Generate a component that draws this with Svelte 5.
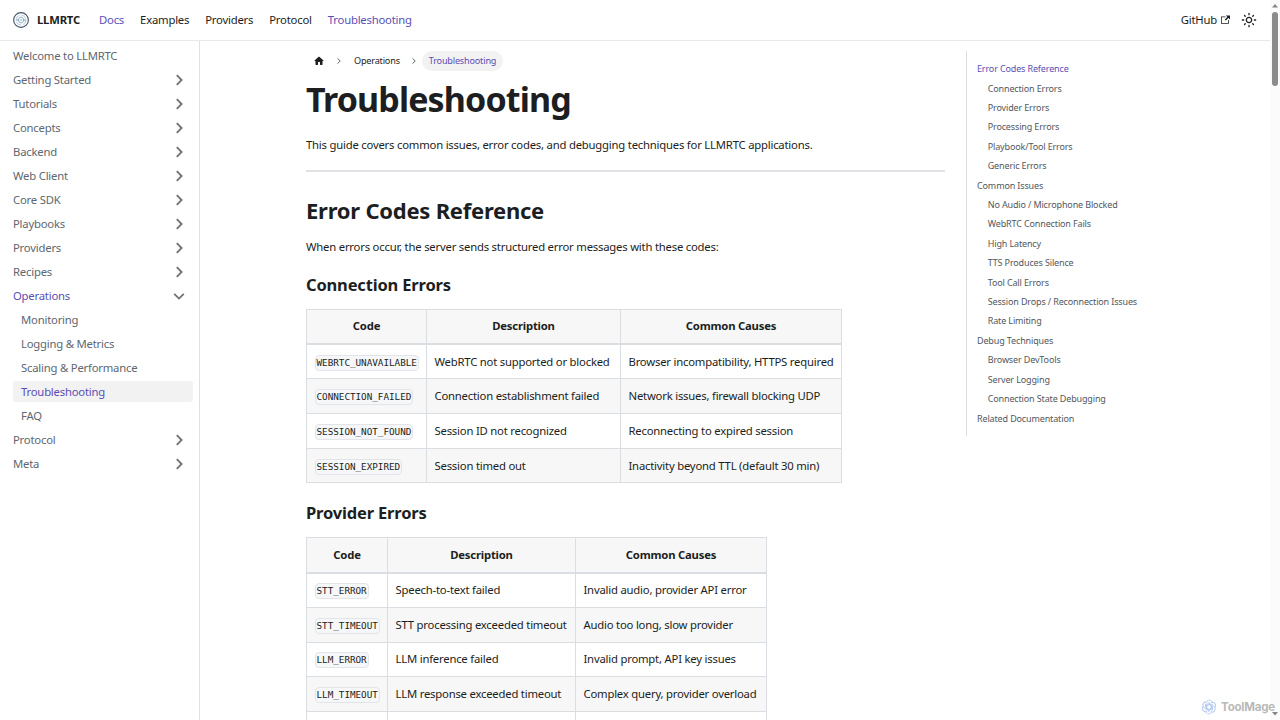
<script lang="ts">
  type TocItem = { label: string; level: 2 | 3 };
  type Row = { code: string; description: string; causes: string };

  const navLinks = ['Docs', 'Examples', 'Providers', 'Protocol', 'Troubleshooting'];
  const activeLinks = ['Docs', 'Troubleshooting'];

  const sections = [
    'Getting Started', 'Tutorials', 'Concepts', 'Backend', 'Web Client',
    'Core SDK', 'Playbooks', 'Providers', 'Recipes', 'Operations', 'Protocol', 'Meta',
  ];
  const operations = ['Monitoring', 'Logging & Metrics', 'Scaling & Performance', 'Troubleshooting', 'FAQ'];

  let open = $state('Operations');

  const toc: TocItem[] = [
    { label: 'Error Codes Reference', level: 2 },
    { label: 'Connection Errors', level: 3 },
    { label: 'Provider Errors', level: 3 },
    { label: 'Processing Errors', level: 3 },
    { label: 'Playbook/Tool Errors', level: 3 },
    { label: 'Generic Errors', level: 3 },
    { label: 'Common Issues', level: 2 },
    { label: 'No Audio / Microphone Blocked', level: 3 },
    { label: 'WebRTC Connection Fails', level: 3 },
    { label: 'High Latency', level: 3 },
    { label: 'TTS Produces Silence', level: 3 },
    { label: 'Tool Call Errors', level: 3 },
    { label: 'Session Drops / Reconnection Issues', level: 3 },
    { label: 'Rate Limiting', level: 3 },
    { label: 'Debug Techniques', level: 2 },
    { label: 'Browser DevTools', level: 3 },
    { label: 'Server Logging', level: 3 },
    { label: 'Connection State Debugging', level: 3 },
    { label: 'Related Documentation', level: 2 },
  ];

  const connectionErrors: Row[] = [
    { code: 'WEBRTC_UNAVAILABLE', description: 'WebRTC not supported or blocked', causes: 'Browser incompatibility, HTTPS required' },
    { code: 'CONNECTION_FAILED', description: 'Connection establishment failed', causes: 'Network issues, firewall blocking UDP' },
    { code: 'SESSION_NOT_FOUND', description: 'Session ID not recognized', causes: 'Reconnecting to expired session' },
    { code: 'SESSION_EXPIRED', description: 'Session timed out', causes: 'Inactivity beyond TTL (default 30 min)' },
  ];
  const providerErrors: Row[] = [
    { code: 'STT_ERROR', description: 'Speech-to-text failed', causes: 'Invalid audio, provider API error' },
    { code: 'STT_TIMEOUT', description: 'STT processing exceeded timeout', causes: 'Audio too long, slow provider' },
    { code: 'LLM_ERROR', description: 'LLM inference failed', causes: 'Invalid prompt, API key issues' },
    { code: 'LLM_TIMEOUT', description: 'LLM response exceeded timeout', causes: 'Complex query, provider overload' },
    { code: '', description: '', causes: '' },
  ];
</script>

{#snippet errorTable(rows: Row[], widths: number[])}
  <table style:width="{widths[0] + widths[1] + widths[2]}px">
    <colgroup>
      {#each widths as w}<col style:width="{w}px" />{/each}
    </colgroup>
    <thead>
      <tr><th>Code</th><th>Description</th><th>Common Causes</th></tr>
    </thead>
    <tbody>
      {#each rows as row}
        <tr>
          <td>{#if row.code}<code>{row.code}</code>{/if}</td>
          <td>{row.description}</td>
          <td>{row.causes}</td>
        </tr>
      {/each}
    </tbody>
  </table>
{/snippet}

{#snippet separator()}
  <svg class="separator" viewBox="0 0 6 8" width="6" height="8"><path d="M1.5 1.4 4.2 4 1.5 6.6" /></svg>
{/snippet}

<div class="page">
  <nav class="navbar">
    <a class="brand" href="#top">
      <svg class="logo" viewBox="0 0 18 18" width="18" height="18">
        <circle cx="9" cy="9" r="7.4" fill="#f9fbfc" stroke="#46546a" stroke-width="1.1" />
        <circle cx="9" cy="9" r="4.9" fill="none" stroke="#a9c2d8" stroke-width=".8" stroke-dasharray="5.5 2.2" />
        <path d="M3.8 9h2.4c.5-2.2 1.7-2.8 2.8-2.8s2.3.6 2.8 2.8h2.4M6.2 9c.5 2.2 1.7 2.8 2.8 2.8s2.3-.6 2.8-2.8" fill="none" stroke="#7896b8" stroke-width=".8" />
        <path d="M7.6 9h2.8" stroke="#8fc0ce" stroke-width="1" />
      </svg>
      <b>LLMRTC</b>
    </a>
    {#each navLinks as link}
      <a class="nav-link" class:active={activeLinks.includes(link)} href="#top">{link}</a>
    {/each}
    <a class="nav-link github" href="#top">
      GitHub
      <svg viewBox="0 0 24 24" width="9" height="9"><path fill="currentColor" d="M21 13v10h-21v-19h12v2h-10v15h17v-8h2zm3-12h-10.988l4.035 4-6.977 7.07 2.828 2.828 6.977-7.07 4.125 4.172v-11z" /></svg>
    </a>
    <button class="theme" aria-label="Switch theme">
      <svg viewBox="0 0 24 24" width="16" height="16"><path fill="currentColor" d="M12,9c1.65,0,3,1.35,3,3s-1.35,3-3,3s-3-1.35-3-3S10.35,9,12,9 M12,7c-2.76,0-5,2.24-5,5s2.24,5,5,5s5-2.24,5-5 S14.76,7,12,7L12,7z M2,13l2,0c0.55,0,1-0.45,1-1s-0.45-1-1-1l-2,0c-0.55,0-1,0.45-1,1S1.45,13,2,13z M20,13l2,0c0.55,0,1-0.45,1-1 s-0.45-1-1-1l-2,0c-0.55,0-1,0.45-1,1S19.45,13,20,13z M11,2v2c0,0.55,0.45,1,1,1s1-0.45,1-1V2c0-0.55-0.45-1-1-1S11,1.45,11,2z M11,20v2c0,0.55,0.45,1,1,1s1-0.45,1-1v-2c0-0.55-0.45-1-1-1C11.45,19,11,19.45,11,20z M5.99,4.58c-0.39-0.39-1.03-0.39-1.41,0 c-0.39,0.39-0.39,1.03,0,1.41l1.06,1.06c0.39,0.39,1.03,0.39,1.41,0s0.39-1.03,0-1.41L5.99,4.58z M18.36,16.95 c-0.39-0.39-1.03-0.39-1.41,0c-0.39,0.39-0.39,1.03,0,1.41l1.06,1.06c0.39,0.39,1.03,0.39,1.41,0c0.39-0.39,0.39-1.03,0-1.41 L18.36,16.95z M19.42,5.99c0.39-0.39,0.39-1.03,0-1.41c-0.39-0.39-1.03-0.39-1.41,0l-1.06,1.06c-0.39,0.39-0.39,1.03,0,1.41 s1.03,0.39,1.41,0L19.42,5.99z M7.05,18.36c0.39-0.39,0.39-1.03,0-1.41c-0.39-0.39-1.03-0.39-1.41,0l-1.06,1.06 c-0.39,0.39-0.39,1.03,0,1.41s1.03,0.39,1.41,0L7.05,18.36z" /></svg>
    </button>
  </nav>

  <div class="body">
    <aside class="sidebar">
      <a class="item" href="#top">Welcome to LLMRTC</a>
      {#each sections as section}
        <button class="item" class:active={open === section} onclick={() => (open = open === section ? '' : section)}>
          <span>{section}</span>
          <svg class:open={open === section} viewBox="0 0 12 12" width="12" height="12"><path d="M3.8 1.2 8.6 6 3.8 10.8" /></svg>
        </button>
        {#if section === 'Operations' && open === section}
          {#each operations as page}
            <a class="item sub" class:current={page === 'Troubleshooting'} href="#top">{page}</a>
          {/each}
        {/if}
      {/each}
    </aside>

    <main>
      <div class="breadcrumbs">
        <svg class="home" viewBox="0 0 24 24" width="12" height="12"><path d="M10 19v-5h4v5c0 .55.45 1 1 1h3c.55 0 1-.45 1-1v-7h1.7c.46 0 .68-.57.33-.87L12.67 3.6c-.38-.34-.96-.34-1.34 0l-8.36 7.53c-.34.3-.13.87.33.87H5v7c0 .55.45 1 1 1h3c.55 0 1-.45 1-1z" /></svg>
        {@render separator()}
        <span class="crumb">Operations</span>
        {@render separator()}
        <span class="pill">Troubleshooting</span>
      </div>
      <h1>Troubleshooting</h1>
      <p class="intro">This guide covers common issues, error codes, and debugging techniques for LLMRTC applications.</p>
      <hr />
      <h2>Error Codes Reference</h2>
      <p class="lead">When errors occur, the server sends structured error messages with these codes:</p>
      <h3>Connection Errors</h3>
      {@render errorTable(connectionErrors, [120, 194, 221])}
      <h3 class="next">Provider Errors</h3>
      {@render errorTable(providerErrors, [81, 188, 191])}
    </main>

    <aside class="toc">
      {#each toc as item, i}
        <a class:nested={item.level === 3} class:active={i === 0} href="#top">{item.label}</a>
      {/each}
    </aside>
  </div>

  <div class="scrollbar">
    <svg viewBox="0 0 10 12" width="10" height="12"><path d="M2 7.5 5 4 8 7.5z" /></svg>
    <div class="thumb"></div>
    <svg class="down" viewBox="0 0 10 12" width="10" height="12"><path d="M2 4 5 7.5 8 4z" /></svg>
  </div>

  <div class="watermark">
    <svg viewBox="0 0 16 16" width="16" height="16">
      {#each [0, 60, 120, 180, 240, 300] as angle}
        <path d="M8 5.3 10.3 6.7V10.6L7 12.6M5.4 4.2C5 1.4 9.2-.2 11.4 2.9" transform="rotate({angle} 8 8)" />
      {/each}
    </svg>
    <span>ToolMage</span>
  </div>
</div>

<style>
  :global(body) { margin: 0; overflow: hidden; }
  .page {
    position: relative;
    width: 1280px;
    height: 720px;
    overflow: hidden;
    background: #fff;
    color: #1c1e21;
    font-family: "Noto Sans", "Open Sans", sans-serif;
    font-size: 11.3px;
    letter-spacing: -0.21px;
    line-height: 18px;
  }
  a { color: inherit; text-decoration: none; }
  button { padding: 0; border: 0; background: none; color: inherit; font: inherit; letter-spacing: inherit; }

  .navbar {
    display: flex;
    align-items: center;
    box-sizing: border-box;
    width: 1270px;
    height: 41px;
    padding: 0 13px 1px 12px;
    border-bottom: 1px solid #e9e9e9;
  }
  .brand { display: flex; align-items: center; gap: 7px; width: 79px; }
  .logo { flex: none; }
  .nav-link { margin-left: 16px; white-space: nowrap; }
  .brand + .nav-link { margin-left: 8px; }
  .active { color: #5b4fb5; }
  .github { display: flex; align-items: center; gap: 4px; margin-left: auto; }
  .theme { display: flex; margin-left: 11px; }

  .body { display: flex; height: 679px; }
  .sidebar {
    display: flex;
    flex-direction: column;
    gap: 2.67px;
    box-sizing: border-box;
    width: 200px;
    padding: 4.33px 6px 0 13px;
    border-right: 1px solid #dfe1e4;
    color: #606770;
  }
  .item {
    display: flex;
    align-items: center;
    justify-content: space-between;
    flex: none;
    height: 21.33px;
    border-radius: 3px;
    white-space: nowrap;
  }
  .item svg { margin-right: 8.5px; fill: none; stroke: #707070; stroke-width: 1.8; }
  .item svg.open { transform: rotate(90deg); }
  .item.active { color: #5b4fb5; }
  .sub { padding-left: 8px; }
  .current { background: #f2f2f2; color: #5b4fb5; }

  main { width: 639px; margin-left: 106px; white-space: nowrap; }
  .breadcrumbs {
    display: flex;
    align-items: center;
    height: 20px;
    margin-top: 10px;
    font-size: 9.1px;
    letter-spacing: -0.18px;
  }
  .home { margin-left: 6.5px; fill: #1c1e21; }
  .separator { margin: 0 12px 0 11.5px; fill: none; stroke: #606770; stroke-width: 1; }
  .crumb { width: 46px; }
  .crumb + .separator { margin: 0 5px 0 11px; }
  .pill {
    box-sizing: border-box;
    width: 81px;
    height: 20px;
    border-radius: 10px;
    background: #f2f2f2;
    color: #5b4fb5;
    line-height: 20px;
    text-align: center;
  }
  h1, h2, h3, p { margin: 0; }
  h1 { height: 42px; margin-top: 7px; font-size: 34px; letter-spacing: -0.87px; line-height: 42px; }
  .intro { margin-top: 16px; }
  hr { height: 2px; margin: 16px 0 0; border: 0; background: #e0e2e5; }
  h2 { margin-top: 24px; font-size: 22px; letter-spacing: -0.24px; line-height: 28px; }
  .lead { margin-top: 14px; }
  h3 { margin-top: 18px; font-size: 16.5px; letter-spacing: -0.17px; line-height: 22px; }
  h3.next { margin-top: 19px; }

  table { margin-top: 13px; border-collapse: collapse; table-layout: fixed; }
  th, td {
    box-sizing: border-box;
    height: 34.7px;
    padding: 0 7.5px;
    border: 1px solid #dadde1;
    text-align: left;
  }
  th { padding-bottom: 1px; background: #f7f7f7; border-bottom-width: 2px; text-align: center; }
  tbody tr:nth-child(even) { background: #f7f7f7; }
  code {
    display: inline-block;
    padding: 0 1px;
    border: 1px solid #e2e4e7;
    border-radius: 4px;
    background: #f6f7f8;
    font: 9.3px/14px "DejaVu Sans Mono", monospace;
    letter-spacing: -0.02px;
  }

  .toc {
    display: flex;
    flex-direction: column;
    box-sizing: border-box;
    width: 200px;
    height: 385px;
    margin: 10px 0 0 21px;
    padding: 8.2px 0 0 10px;
    border-left: 1px solid #dadde1;
    color: #525860;
    font-size: 9px;
    letter-spacing: -0.14px;
  }
  .toc a { flex: none; height: 19.42px; line-height: 19.42px; white-space: nowrap; }
  .toc .nested { padding-left: 10.7px; }

  .scrollbar {
    position: absolute;
    top: 0;
    right: 0;
    display: flex;
    flex-direction: column;
    align-items: center;
    width: 10px;
    height: 720px;
    background: #fbfbfb;
  }
  .scrollbar svg { fill: #858585; }
  .down { margin-top: auto; }
  .thumb { width: 6px; height: 74px; border-radius: 3px; background: #8b8b8b; }

  .watermark {
    position: absolute;
    right: 5px;
    bottom: 4px;
    display: flex;
    align-items: center;
    gap: 4px;
    color: #b9b9b9;
    font: 700 11.5px/18px Inter, sans-serif;
    letter-spacing: -0.2px;
  }
  .watermark svg { fill: none; stroke: #b5cbf4; stroke-width: 1; }
</style>
